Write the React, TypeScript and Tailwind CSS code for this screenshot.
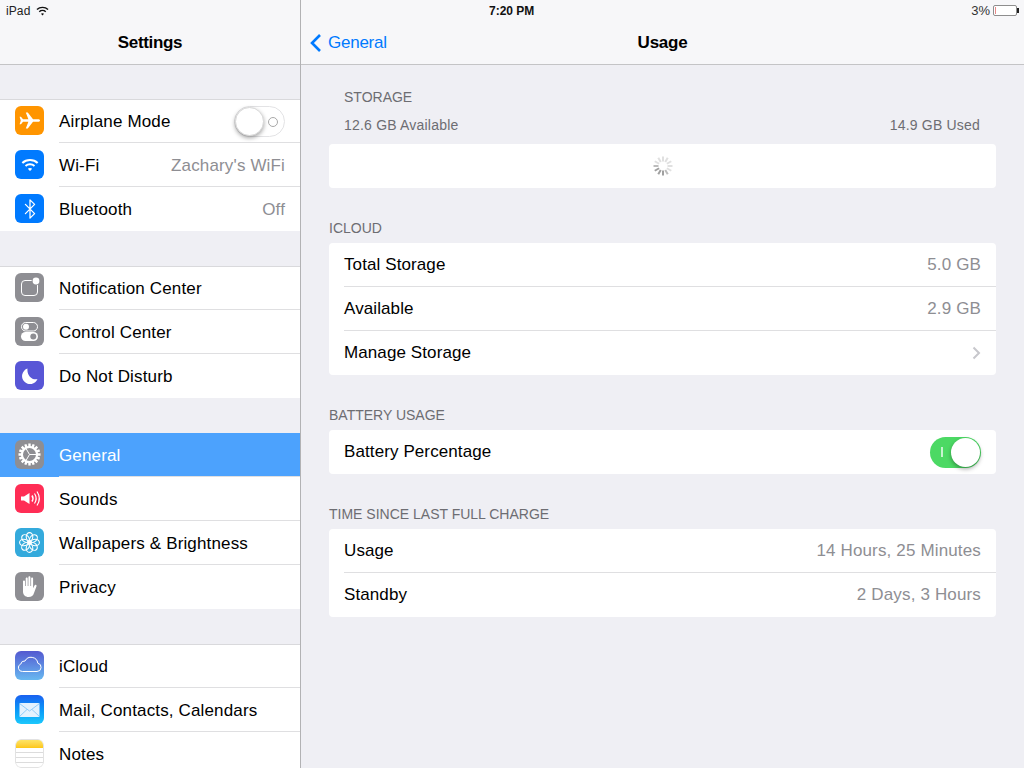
import type { ReactNode } from "react";
import { Bluetooth } from "lucide-react";

const WifiGlyph = ({ size = 18, color = "#fff" }: { size?: number; color?: string }) => (
  <svg width={size} height={size * 0.75} viewBox="0 0 20 15" fill="none" stroke={color} strokeWidth="2.200">
    <path d="M1.500 5.500C6 1 14 1 18.500 5.500" />
    <path d="M5 9c2.800-2.600 7.200-2.600 10 0" />
    <path d="M10 14.500 7.600 12c1.400-1.200 3.400-1.200 4.800 0z" fill={color} stroke="none" />
  </svg>
);

const IconBox = ({ className, children }: { className: string; children?: ReactNode }) => (
  <div className={`w-[29px] h-[29px] mb-px rounded-[6px] flex items-center justify-center shrink-0 overflow-hidden ${className}`}>
    {children}
  </div>
);

const PlaneIcon = () => (
  <svg width="29" height="29" viewBox="0 0 29 29">
    <path
      d="M25 14.500c0-.9-1-1.300-2-1.300h-5L12.800 6.500h-2l2.600 6.700H8L6 10.800H4.600l1.200 3.700-1.200 3.700H6l2-2.400h5.400l-2.600 6.700h2l5.200-6.700h5c1 0 2-.4 2-1.300z"
      fill="#fff"
    />
  </svg>
);

const NotificationIcon = () => (
  <svg width="29" height="29" viewBox="0 0 29 29" fill="none">
    <rect x="6.500" y="7.500" width="16" height="15" rx="3.500" stroke="#fff" strokeWidth="1" />
    <circle cx="21" cy="8" r="4.400" fill="#8e8e93" />
    <circle cx="21" cy="8" r="3.400" fill="#fff" />
  </svg>
);

const ControlIcon = () => (
  <svg width="29" height="29" viewBox="0 0 29 29" fill="none">
    <rect x="6.500" y="5.500" width="16" height="8.500" rx="4.200" stroke="#fff" strokeWidth="1" />
    <circle cx="11" cy="9.700" r="3" fill="#fff" />
    <rect x="6" y="15" width="17" height="9" rx="4.500" fill="#fff" />
    <circle cx="18.300" cy="19.500" r="3" fill="#8e8e93" />
  </svg>
);

const MoonIcon = () => (
  <svg width="29" height="29" viewBox="0 0 29 29">
    <path d="M12.500 7.500a8 8 0 1 0 10 10.500c-5.500 1.400-10.800-3.600-10-10.500z" fill="#fff" />
  </svg>
);

const GearIcon = () => {
  const teeth = Array.from({ length: 16 }, (_, i) => i * 22.500);
  return (
    <svg width="29" height="29" viewBox="0 0 29 29" fill="none" stroke="#fff">
      {teeth.map((a) => (
        <line key={a} x1="14.500" y1="3.500" x2="14.500" y2="6.500" strokeWidth="2.400" transform={`rotate(${a} 14.500 14.500)`} />
      ))}
      <circle cx="14.500" cy="14.500" r="7.600" strokeWidth="2.200" />
      <path d="M14.500 14.500H21.500M14.500 14.500 11 8.500M14.500 14.500 11 20.500" strokeWidth="1" />
    </svg>
  );
};

const SoundIcon = () => (
  <svg width="29" height="29" viewBox="0 0 29 29" fill="none" stroke="#fff" strokeWidth="1.200">
    <path d="M6 12.500h3L14.500 9v11L9 16.500H6z" fill="#fff" stroke="none" />
    <path d="M17 11.500c1.200 1.800 1.200 4.200 0 6" strokeWidth="1.500" />
    <path d="M19.500 9.500c2 3 2 7 0 10" />
    <path d="M22 7.500c2.800 4.200 2.800 9.800 0 14" />
  </svg>
);

const FlowerIcon = () => {
  const petals = [0, 45, 90, 135, 180, 225, 270, 315];
  return (
    <svg width="29" height="29" viewBox="0 0 29 29" fill="none" stroke="#fff" strokeWidth="1.100">
      {petals.map((a) => (
        <ellipse key={a} cx="14.500" cy="8.800" rx="3.300" ry="4.200" transform={`rotate(${a} 14.500 14.500)`} />
      ))}
      <circle cx="14.500" cy="14.500" r="2" fill="#fff" stroke="none" />
    </svg>
  );
};

const HandIcon = () => (
  <svg width="29" height="29" viewBox="0 0 29 29">
    <path
      d="M8 9.500c0-1.400 2-1.400 2 0V14h.7V6.500c0-1.400 2-1.400 2 0V14h.7V5.200c0-1.400 2-1.400 2 0V14h.7V6.500c0-1.400 2-1.400 2 0v9.700l1.400-2.800c.7-1.300 2.500-.6 2 .8l-2.400 6.500c-.8 3-2.700 4.300-5.400 4.300-3.500 0-5.700-2.200-5.700-5.500z"
      fill="#fff"
    />
  </svg>
);

const CloudIcon = () => (
  <svg width="29" height="29" viewBox="0 0 29 29" fill="none">
    <path
      d="M8 21h14.500a4.200 4.200 0 0 0 .8-8.300 6.800 6.800 0 0 0-12.800-2.200 3.800 3.800 0 0 0-4.200 3A3.900 3.900 0 0 0 8 21z"
      stroke="#fff"
      strokeWidth="1"
      transform="translate(-.5 -.5)"
    />
  </svg>
);

const MailIcon = () => (
  <svg width="29" height="29" viewBox="0 0 29 29" fill="none">
    <rect x="4.500" y="8" width="20" height="14" rx="1" fill="#e4f2fe" />
    <path d="M4.500 8.500l10 7.500 10-7.500M4.500 21.500l7.500-7M24.500 21.500l-7.500-7" stroke="#7cc3f7" strokeWidth=".8" />
  </svg>
);

const NotesIcon = () => (
  <div className="w-full h-full flex flex-col bg-white border border-[#e2e2e2] rounded-[6px] overflow-hidden">
    <div className="h-[8px] bg-gradient-to-b from-[#fde464] to-[#fdc70c]" />
    <div className="flex-1 flex flex-col justify-evenly">
      <div className="h-px bg-[#dcdcdc]" />
      <div className="h-px bg-[#dcdcdc]" />
      <div className="h-px bg-[#dcdcdc]" />
    </div>
  </div>
);

type SideRow = {
  label: string;
  value?: string;
  box: string;
  icon: ReactNode;
  toggle?: boolean;
  selected?: boolean;
};

const sideGroups: SideRow[][] = [
  [
    { label: "Airplane Mode", box: "bg-[#ff9500]", icon: <PlaneIcon />, toggle: true },
    { label: "Wi-Fi", value: "Zachary's WiFi", box: "bg-[#007aff]", icon: <WifiGlyph /> },
    {
      label: "Bluetooth",
      value: "Off",
      box: "bg-[#007aff]",
      icon: <Bluetooth size={22} color="#fff" strokeWidth={1.4} />,
    },
  ],
  [
    { label: "Notification Center", box: "bg-[#8e8e93]", icon: <NotificationIcon /> },
    { label: "Control Center", box: "bg-[#8e8e93]", icon: <ControlIcon /> },
    { label: "Do Not Disturb", box: "bg-[#5856d6]", icon: <MoonIcon /> },
  ],
  [
    { label: "General", box: "bg-[#8e8e93]", icon: <GearIcon />, selected: true },
    { label: "Sounds", box: "bg-[#ff2d55]", icon: <SoundIcon /> },
    { label: "Wallpapers & Brightness", box: "bg-[#34aadc]", icon: <FlowerIcon /> },
    { label: "Privacy", box: "bg-[#8e8e93]", icon: <HandIcon /> },
  ],
  [
    { label: "iCloud", box: "bg-gradient-to-b from-[#5458d0] to-[#68b8f0]", icon: <CloudIcon /> },
    { label: "Mail, Contacts, Calendars", box: "bg-gradient-to-b from-[#1b60f0] to-[#1dc8fc]", icon: <MailIcon /> },
    { label: "Notes", box: "bg-white", icon: <NotesIcon /> },
  ],
];

const AirplaneToggle = () => (
  <div className="relative w-[51px] h-[31px] rounded-full border border-[#e3e3e5] bg-white">
    <div className="absolute left-[-1px] top-[-1px] w-[29px] h-[29px] mt-px ml-px rounded-full bg-white border border-[#d8d8d8] shadow-[0_2px_4px_rgba(0,0,0,0.35)]" />
    <div className="absolute right-[6px] top-[10px] w-[10px] h-[10px] rounded-full border-[1.5px] border-[#a8a8a8]" />
  </div>
);

function Sidebar() {
  return (
    <aside className="w-[301px] shrink-0 h-full border-r border-[#b2b2b4] bg-[#efeff4] overflow-hidden">
      <div className="h-[65px] bg-[#f7f7f9] border-b border-[#c4c4c6] relative flex items-center justify-center pt-[22px]">
        <span className="text-[17px] font-bold text-black tracking-[-0.35px]">Settings</span>
        <div className="absolute left-[6px] top-[2px] flex items-center gap-[6px]">
          <span className="text-[12px] text-[#222] tracking-[0.1px]">iPad</span>
          <WifiGlyph size={13} color="#111" />
        </div>
      </div>
      <div className="pt-[34px] flex flex-col gap-[35px]">
        {sideGroups.map((group) => (
          <div key={group[0].label} className="bg-white shadow-[inset_0_1px_0_#d9d9dc]">
            {group.map((row, i) => (
              <div
                key={row.label}
                className={`h-[44px] flex items-center pl-[15px] pr-[15px] gap-[15px] relative ${row.selected ? "bg-[#4ca2fd]" : ""}`}
              >
                <IconBox className={row.box}>{row.icon}</IconBox>
                <span
                  className={`text-[17px] pt-px tracking-[0.15px] flex-1 whitespace-nowrap ${row.selected ? "text-white" : "text-black"}`}
                >
                  {row.label}
                </span>
                {row.value && (
                  <span className="text-[17px] pt-px tracking-[0.15px] text-[#8e8e93] whitespace-nowrap">{row.value}</span>
                )}
                {row.toggle && <AirplaneToggle />}
                {i < group.length - 1 && (
                  <div className="absolute left-[59px] right-0 bottom-0 h-px bg-[#dfdfe1]" />
                )}
              </div>
            ))}
          </div>
        ))}
      </div>
    </aside>
  );
}

const Spinner = () => {
  const spokes = Array.from({ length: 12 }, (_, i) => i);
  return (
    <svg width="20" height="20" viewBox="0 0 20 20">
      {spokes.map((i) => (
        <line
          key={i}
          x1="10"
          y1="0.500"
          x2="10"
          y2="5.500"
          stroke={i > 5 && i < 9 ? "#a0a0a0" : i === 5 || i === 9 ? "#bcbcbc" : "#e0e0e0"}
          strokeWidth="2"
          transform={`rotate(${i * 30} 10 10)`}
        />
      ))}
    </svg>
  );
};

const Row = ({ label, last, children }: { label: string; last?: boolean; children?: ReactNode }) => (
  <div className="h-[44px] flex items-center justify-between px-[15px] relative">
    <span className="text-[17px] tracking-[0.1px] text-black">{label}</span>
    {children}
    {!last && <div className="absolute left-[15px] right-0 bottom-0 h-px bg-[#dfdfe1]" />}
  </div>
);

const Value = ({ children }: { children: ReactNode }) => (
  <span className="text-[17px] tracking-[0.15px] text-[#8e8e93]">{children}</span>
);

const SectionLabel = ({ children }: { children: ReactNode }) => (
  <div className="h-[15px] leading-[15px] text-[14px] text-[#6d6d72] mb-[7px]">{children}</div>
);

const GreenToggle = () => (
  <div className="relative w-[51px] h-[31px] rounded-full bg-[#4cd964]">
    <div className="absolute left-[11px] top-[10px] w-[2px] h-[10px] bg-[#c8f3d0]" />
    <div className="absolute right-px top-px w-[29px] h-[29px] rounded-full bg-white shadow-[0_2px_4px_rgba(0,0,0,0.35)]" />
  </div>
);

function Detail() {
  return (
    <main className="flex-1 h-full bg-[#efeff4] overflow-hidden">
      <div className="h-[65px] bg-[#f7f7f9] border-b border-[#c4c4c6] relative flex items-center justify-center pt-[22px]">
        <div className="absolute left-[8px] top-[33px] flex items-center gap-[6px]">
          <svg width="13" height="20" viewBox="0 0 13 20" fill="none" stroke="#007aff" strokeWidth="2.600">
            <path d="M11 2 3 10l8 8" />
          </svg>
          <span className="text-[17px] leading-[20px] tracking-[-0.25px] text-[#007aff]">General</span>
        </div>
        <span className="text-[17px] font-bold text-black tracking-[-0.25px]">Usage</span>
        <span className="absolute left-[188px] top-[2px] text-[12px] font-bold text-[#111]">7:20 PM</span>
        <div className="absolute right-[7px] top-[3px] flex items-center gap-[3px]">
          <span className="text-[13px] leading-[15px] text-[#333]">3%</span>
          <div className="w-[24px] h-[11px] rounded-[2px] border border-[#8e8e8e] bg-white relative">
            <div className="absolute left-px top-px w-px h-[7px] bg-[#e88a8a]" />
            <div className="absolute right-[-3px] top-[2px] w-[2px] h-[5px] bg-[#222]" />
          </div>
        </div>
      </div>

      <div className="px-[28px] pt-[25px]">
        <div className="pl-[15px] pr-[16px]">
          <div className="h-[15px] leading-[15px] text-[14px] text-[#6d6d72]">STORAGE</div>
          <div className="flex justify-between mt-[13px] h-[15px] leading-[15px] text-[14px] tracking-[0.2px] text-[#6d6d72]">
            <span>12.6 GB Available</span>
            <span>14.9 GB Used</span>
          </div>
        </div>
        <div className="mt-[11px] h-[44px] bg-white rounded-[4px] flex items-center justify-center">
          <Spinner />
        </div>

        <div className="mt-[33px]">
          <SectionLabel>ICLOUD</SectionLabel>
          <div className="bg-white rounded-[4px]">
            <Row label="Total Storage">
              <Value>5.0 GB</Value>
            </Row>
            <Row label="Available">
              <Value>2.9 GB</Value>
            </Row>
            <Row label="Manage Storage" last>
              <svg width="9" height="14" viewBox="0 0 9 14" fill="none" stroke="#c7c7cc" strokeWidth="2">
                <path d="M1.500 1.500 7 7l-5.500 5.500" />
              </svg>
            </Row>
          </div>
        </div>

        <div className="mt-[33px]">
          <SectionLabel>BATTERY USAGE</SectionLabel>
          <div className="bg-white rounded-[4px]">
            <Row label="Battery Percentage" last>
              <GreenToggle />
            </Row>
          </div>
        </div>

        <div className="mt-[33px]">
          <SectionLabel>TIME SINCE LAST FULL CHARGE</SectionLabel>
          <div className="bg-white rounded-[4px]">
            <Row label="Usage">
              <Value>14 Hours, 25 Minutes</Value>
            </Row>
            <Row label="Standby" last>
              <Value>2 Days, 3 Hours</Value>
            </Row>
          </div>
        </div>
      </div>
    </main>
  );
}

export default function App() {
  return (
    <div className="w-[1024px] h-[768px] flex overflow-hidden font-['Liberation_Sans',Arial,sans-serif]">
      <Sidebar />
      <Detail />
    </div>
  );
}
